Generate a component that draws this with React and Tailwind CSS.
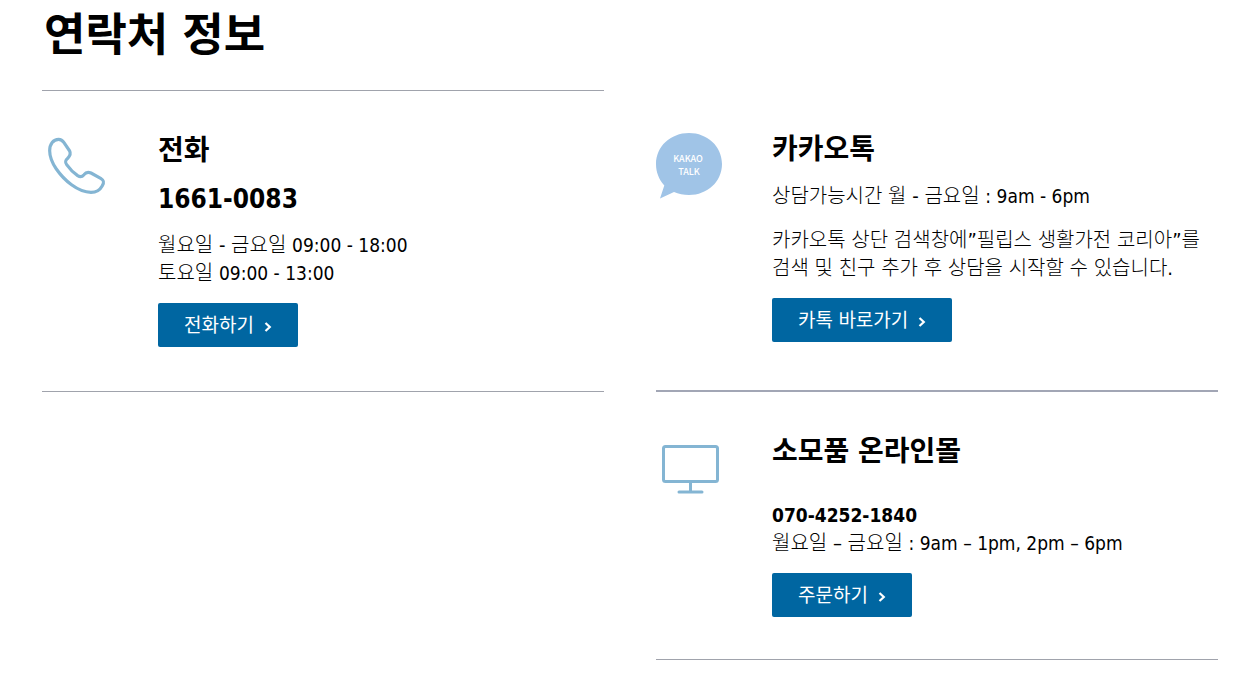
import React from "react";

const bodyFont = "font-['DejaVu_Sans_Condensed','Noto_Sans_CJK_KR',sans-serif]";

function PhoneIcon() {
  return (
    <svg className="block h-[66px] w-[66px]" viewBox="18 39 198 198" fill="none" stroke="#84b5d3" strokeWidth="9.500" strokeLinejoin="round" aria-hidden="true">
      <path d="M41 92C41 72 52 58 68 58C75 58 80 62 84 68L101 93C105 101 102 107 96 114C88 121 86 126 92 134C101 147 112 158 125 167C133 172 138 171 144 164C150 156 156 155 165 159L194 175C204 181 205 187 199 197C192 210 180 217 165 217C125 217 84 180 61 147C49 129 41 110 41 92Z" />
    </svg>
  );
}

function KakaoIcon() {
  return (
    <svg className="block h-[68px] w-[68px]" viewBox="0 0 68 68" aria-hidden="true">
      <path d="M33 1C51.500 1 66 14.500 66 32C66 49.500 51.500 63 33 63C27.500 63 22.500 62 18 60L4 66.500L8.300 53.500C3.200 47.800 0 40.500 0 32C0 14.500 14.500 1 33 1Z" fill="#a0c4e7" />
      <g fill="#fff" fontFamily="Noto Sans CJK KR, sans-serif" fontSize="9" fontWeight="500" textAnchor="middle">
        <text x="32" y="30">KAKAO</text>
        <text x="33" y="43">TALK</text>
      </g>
    </svg>
  );
}

function MonitorIcon() {
  return (
    <svg className="mt-1.5 ml-1 block h-[60px] w-[62px]" viewBox="0 0 62 60" fill="none" stroke="#84b5d3" strokeWidth="3" strokeLinecap="round" aria-hidden="true">
      <rect x="3.500" y="6.500" width="54" height="35" rx="2" />
      <path d="M30.500 42v10M19 52h23" />
    </svg>
  );
}

function ActionLink({ href, children }) {
  return (
    <a href={href} className="flex h-11 w-fit items-center gap-2.5 rounded-xs bg-[#0066a1] px-[26px] text-[19px] font-normal text-white">
      <span>{children}</span>
      <svg className="mt-1 h-[10px] w-2" viewBox="0 0 8 10" fill="none" stroke="currentColor" strokeWidth="2.200" aria-hidden="true">
        <path d="M1.500 1L5.800 5L1.500 9" />
      </svg>
    </a>
  );
}

function Hours({ children }) {
  return <span className="text-[19px]">{children}</span>;
}

function Contact({ icon, title, className, children }) {
  return (
    <section className={`flex pt-[42px] ${className}`}>
      <div className="w-[116px] shrink-0">{icon}</div>
      <div className="min-w-0 flex-1">
        <h2 className="text-[28px] leading-9 font-bold">{title}</h2>
        {children}
      </div>
    </section>
  );
}

export default function App() {
  return (
    <main className={`bg-white pr-[39px] pl-[42px] text-xl leading-7 font-light text-black ${bodyFont}`}>
      <h1 className="h-[90px] pt-1 pl-0.5 text-[45px] leading-[64px] font-bold">연락처 정보</h1>
      <div className="grid grid-cols-2 gap-x-[52px]">
        <Contact icon={<PhoneIcon />} title="전화" className="border-y border-[#a0a3ac] pb-11">
          <p className="mt-3 text-[26px] leading-9 font-bold">1661-0083</p>
          <p className="mt-[14px] mb-4">
            월요일 - 금요일 <Hours>09:00 - 18:00</Hours>
            <br />
            토요일 <Hours>09:00 - 13:00</Hours>
          </p>
          <ActionLink href="tel:1661-0083">전화하기</ActionLink>
        </Contact>
        <Contact icon={<KakaoIcon />} title="카카오톡" className="border-b-2 border-[#a2a6b5]">
          <p className="mt-[14px]">
            상담가능시간 월 - 금요일 <Hours>: 9am - 6pm</Hours>
          </p>
          <p className="mt-4 mb-4">
            카카오톡 상단 검색창에”필립스 생활가전 코리아”를
            <br />
            검색 및 친구 추가 후 상담을 시작할 수 있습니다.
          </p>
          <ActionLink href="#kakao">카톡 바로가기</ActionLink>
        </Contact>
        <Contact icon={<MonitorIcon />} title="소모품 온라인몰" className="col-start-2 border-b border-[#a0a3ac] pb-[42px]">
          <p className="mt-[31px] mb-4">
            <strong className="text-[19px] font-bold">070-4252-1840</strong>
            <br />
            월요일 – 금요일 <Hours>: 9am – 1pm, 2pm – 6pm</Hours>
          </p>
          <ActionLink href="#shop">주문하기</ActionLink>
        </Contact>
      </div>
    </main>
  );
}
